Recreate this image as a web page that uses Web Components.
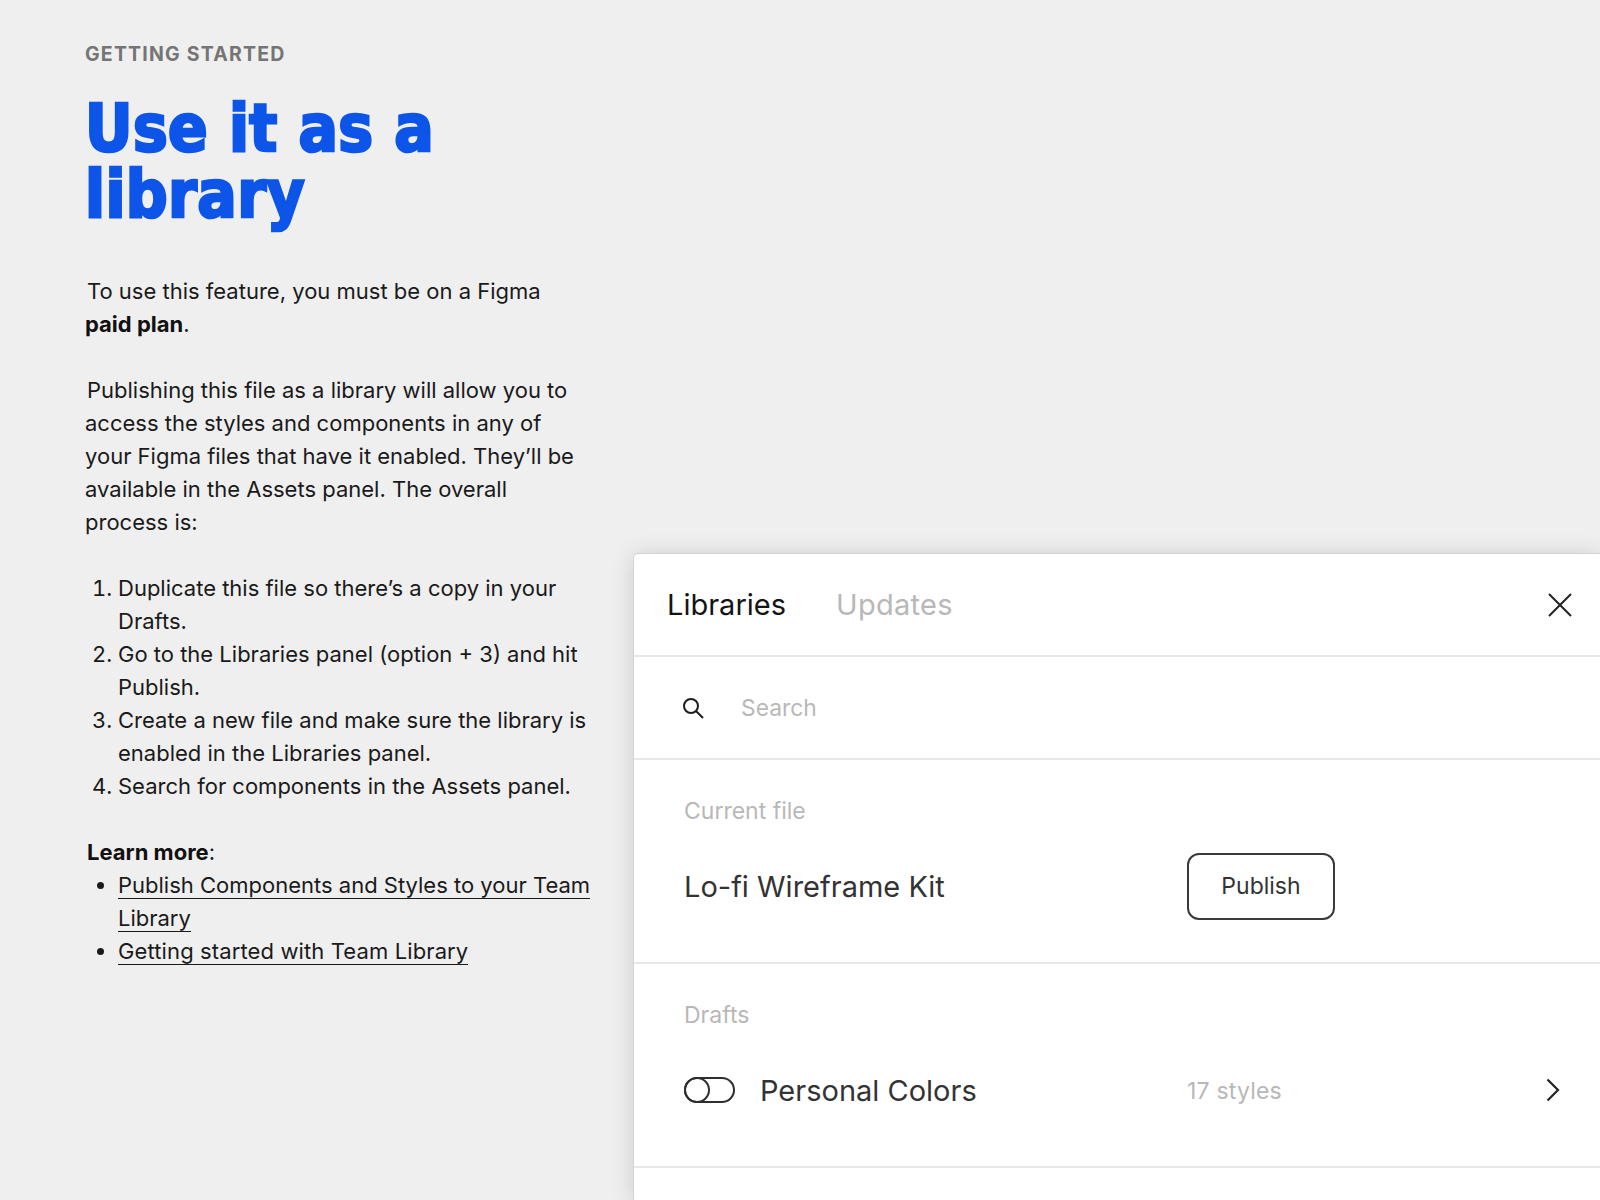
<!DOCTYPE html>
<html>
<head>
<meta charset="utf-8">
<style>
  html, body { margin: 0; height: 100%; overflow: hidden; background: #efefef; }
  body { font-family: Inter, "Liberation Sans", sans-serif; }
  page-layout { height: 1200px; }
</style>
</head>
<body>
<page-layout>
  <guide-article slot="article"></guide-article>
  <libraries-panel slot="panel">
    <panel-section label="Current file">
      <library-row name="Lo-fi Wireframe Kit" action="publish"></library-row>
    </panel-section>
    <panel-section label="Drafts">
      <library-row name="Personal Colors" meta="17 styles" toggle></library-row>
    </panel-section>
  </libraries-panel>
</page-layout>

<script>
const layoutTemplate = document.createElement("template");
layoutTemplate.innerHTML = `
  <style>
    :host {
      display: grid;
      grid-template-columns: 634px 966px;
      width: 1600px;
      overflow: hidden;
    }
    .panel-col {
      padding-top: 554px;
    }
  </style>
  <div><slot name="article"></slot></div>
  <div class="panel-col"><slot name="panel"></slot></div>
`;

class PageLayout extends HTMLElement {
  constructor() {
    super();
    this.attachShadow({ mode: "open" });
    this.shadowRoot.appendChild(layoutTemplate.content.cloneNode(true));
  }
}

const articleTemplate = document.createElement("template");
articleTemplate.innerHTML = `
  <style>
    :host {
      display: block;
      padding: 42px 0 0 85px;
      color: #1a1a1a;
      font-family: Inter, "Liberation Sans", sans-serif;
      font-size: 22px;
      line-height: 33px;
    }
    .eyebrow {
      margin: 0;
      font-size: 19.5px;
      line-height: 24px;
      font-weight: 700;
      letter-spacing: 1.2px;
      color: #757575;
    }
    h1 {
      margin: 30px 0 0;
      font-family: "DejaVu Sans Condensed", "DejaVu Sans", sans-serif;
      font-stretch: condensed;
      font-kerning: none;
      font-size: 65px;
      line-height: 66px;
      font-weight: 700;
      letter-spacing: 0.4px;
      color: #0d54e8;
      -webkit-text-stroke: 2.6px #0d54e8;
    }
    p {
      margin: 0;
      width: 510px;
    }
    .first { margin-top: 47px; }
    .gap { margin-top: 33px; }
    ol, ul {
      margin: 0;
      padding: 0 0 0 33px;
      width: 480px;
    }
    ol { margin-top: 33px; }
    a {
      color: inherit;
      text-decoration: none;
      border-bottom: 1.5px solid #1a1a1a;
    }
    .wide { letter-spacing: 0.12px; }
    b { font-weight: 700; color: #111; }
    .indent { padding-left: 2px; }
  </style>
  <div class="eyebrow">GETTING STARTED</div>
  <h1>Use it as a<br>library</h1>
  <p class="first"><span class="indent">To use this feature, you must be on a Figma</span><br><b>paid plan</b>.</p>
  <p class="gap"><span class="indent">Publishing this file as a library will allow you to</span><br>access the styles and components in any of<br>your Figma files that have it enabled. They’ll be<br>available in the Assets panel. The overall<br>process is:</p>
  <ol>
    <li>Duplicate this file so there’s a copy in your Drafts.</li>
    <li>Go to the Libraries panel (option + 3) and hit Publish.</li>
    <li>Create a new file and make sure the library is enabled in the Libraries panel.</li>
    <li>Search for components in the Assets panel.</li>
  </ol>
  <p class="gap"><span class="indent"><b>Learn more</b>:</span></p>
  <ul>
    <li><a href="#">Publish Components and Styles to your Team Library</a></li>
    <li><a href="#" class="wide">Getting started with Team Library</a></li>
  </ul>
`;

class GuideArticle extends HTMLElement {
  constructor() {
    super();
    this.attachShadow({ mode: "open" });
    this.shadowRoot.appendChild(articleTemplate.content.cloneNode(true));
  }
}

const panelTemplate = document.createElement("template");
panelTemplate.innerHTML = `
  <style>
    :host {
      display: block;
      height: 646px;
      background: #fff;
      border-radius: 4px 0 0 0;
      box-shadow: 0 0 0 1px #d4d4d4, 0 2px 24px rgba(0, 0, 0, 0.16);
      font-family: Inter, "Liberation Sans", sans-serif;
    }
    .tabs {
      display: flex;
      align-items: center;
      gap: 50px;
      height: 101px;
      padding: 0 28px 0 33px;
      border-bottom: 2px solid #e8e8e8;
      font-size: 29px;
      color: #b8b8b8;
    }
    .tabs .active { color: #141414; }
    .tabs .idle { letter-spacing: 0.3px; }
    .close { margin-left: auto; width: 24px; height: 24px; }
    .search {
      display: flex;
      align-items: center;
      gap: 37px;
      height: 101px;
      padding: 0 48px;
      border-bottom: 2px solid #e8e8e8;
      font-size: 22.8px;
      color: #b8b8b8;
    }
    svg { display: block; flex: none; }
  </style>
  <div class="tabs">
    <span class="active">Libraries</span>
    <span class="idle">Updates</span>
    <svg class="close" viewBox="0 0 24 24" fill="none" stroke="#222" stroke-width="2">
      <path d="M1 1 L23 23 M23 1 L1 23"/>
    </svg>
  </div>
  <div class="search">
    <svg width="22" height="22" viewBox="0 0 22 22" fill="none" stroke="#1c1c1c" stroke-width="2">
      <circle cx="9" cy="9" r="7"/>
      <path d="M14 14 L21 21"/>
    </svg>
    <span>Search</span>
  </div>
  <slot></slot>
`;

class LibrariesPanel extends HTMLElement {
  constructor() {
    super();
    this.attachShadow({ mode: "open" });
    this.shadowRoot.appendChild(panelTemplate.content.cloneNode(true));
  }
}

const sectionTemplate = document.createElement("template");
sectionTemplate.innerHTML = `
  <style>
    :host {
      display: block;
      height: 202px;
      padding: 0 40px 0 50px;
      border-bottom: 2px solid #e8e8e8;
    }
    .label {
      padding-top: 38px;
      font-size: 23px;
      line-height: 27px;
      color: #b8b8b8;
    }
  </style>
  <div class="label"></div>
  <slot></slot>
`;

class PanelSection extends HTMLElement {
  constructor() {
    super();
    this.attachShadow({ mode: "open" });
    this.shadowRoot.appendChild(sectionTemplate.content.cloneNode(true));
  }

  connectedCallback() {
    this.shadowRoot.querySelector(".label").textContent =
      this.getAttribute("label");
  }
}

const rowTemplate = document.createElement("template");
rowTemplate.innerHTML = `
  <style>
    :host {
      display: grid;
      grid-template-columns: 503px 1fr auto;
      align-items: center;
      height: 68px;
      margin-top: 27px;
      font-size: 29px;
      color: #333;
    }
    .name { display: flex; align-items: center; gap: 25px; }
    .detail { display: flex; align-items: center; }
    .meta { font-size: 23px; letter-spacing: 0.2px; color: #b8b8b8; padding-top: 1px; }
    .publish {
      display: flex;
      align-items: center;
      justify-content: center;
      box-sizing: border-box;
      width: 148px;
      height: 67px;
      border: 2px solid #3a3a3a;
      border-radius: 12px;
      font-size: 23px;
      color: #333;
    }
    svg { display: block; }
  </style>
  <div class="name"></div>
  <div class="detail"></div>
  <div class="end"></div>
`;

const toggleIcon = `
  <svg width="51" height="26" viewBox="0 0 51 26" fill="none" stroke="#2e2e2e" stroke-width="2">
    <rect x="1" y="1" width="49" height="24" rx="12"/>
    <circle cx="13" cy="13" r="12"/>
  </svg>`;

const chevronIcon = `
  <svg width="14" height="24" viewBox="0 0 14 24" fill="none" stroke="#222" stroke-width="2.2">
    <path d="M1.5 1.5 L12 12 L1.5 22.5"/>
  </svg>`;

class LibraryRow extends HTMLElement {
  constructor() {
    super();
    this.attachShadow({ mode: "open" });
    this.shadowRoot.appendChild(rowTemplate.content.cloneNode(true));
  }

  connectedCallback() {
    const name = this.shadowRoot.querySelector(".name");
    const detail = this.shadowRoot.querySelector(".detail");
    const end = this.shadowRoot.querySelector(".end");

    name.innerHTML = `${this.hasAttribute("toggle") ? toggleIcon : ""}<span>${this.getAttribute("name")}</span>`;

    if (this.getAttribute("action") === "publish") {
      detail.innerHTML = `<div class="publish">Publish</div>`;
    } else {
      detail.innerHTML = `<span class="meta">${this.getAttribute("meta")}</span>`;
      end.innerHTML = chevronIcon;
    }
  }
}

customElements.define("page-layout", PageLayout);
customElements.define("guide-article", GuideArticle);
customElements.define("libraries-panel", LibrariesPanel);
customElements.define("panel-section", PanelSection);
customElements.define("library-row", LibraryRow);
</script>
</body>
</html>
